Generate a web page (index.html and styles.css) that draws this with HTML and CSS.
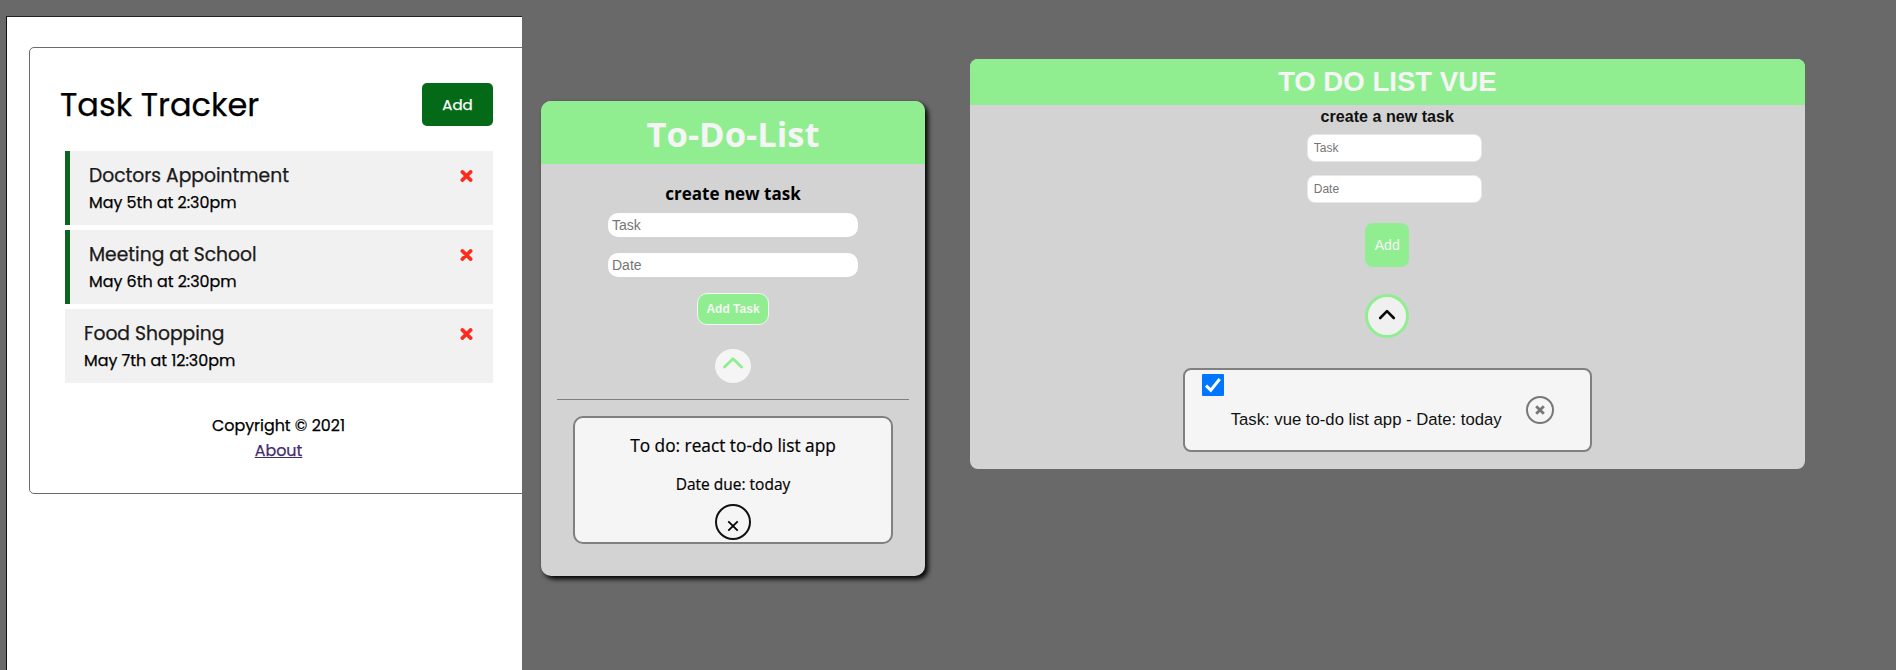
FILE: index.html
```html
<!DOCTYPE html>
<html lang="en">
<head>
<meta charset="utf-8">
<title>Task apps</title>
<link rel="stylesheet" href="styles.css">
</head>
<body>
<main class="board">
  <section class="tracker">
    <div class="tracker-box">
      <header class="tracker-header">
        <h1 class="tracker-title">Task Tracker</h1>
        <button class="tracker-add">Add</button>
      </header>
      <div class="tasks">
        <article class="task reminder">
          <h3 class="task-name">Doctors Appointment<svg class="times" viewBox="0 0 13 12"><path d="M2.3 1.9 10.7 10.1M10.7 1.9 2.3 10.1"/></svg></h3>
          <p class="task-date">May 5th at 2:30pm</p>
        </article>
        <article class="task reminder">
          <h3 class="task-name">Meeting at School<svg class="times" viewBox="0 0 13 12"><path d="M2.3 1.9 10.7 10.1M10.7 1.9 2.3 10.1"/></svg></h3>
          <p class="task-date">May 6th at 2:30pm</p>
        </article>
        <article class="task">
          <h3 class="task-name">Food Shopping<svg class="times" viewBox="0 0 13 12"><path d="M2.3 1.9 10.7 10.1M10.7 1.9 2.3 10.1"/></svg></h3>
          <p class="task-date">May 7th at 12:30pm</p>
        </article>
      </div>
      <footer class="tracker-footer">
        <p>Copyright © 2021</p>
        <a href="#">About</a>
      </footer>
    </div>
  </section>

  <section class="todo">
    <h1 class="todo-title">To-Do-List</h1>
    <h3 class="todo-sub">create new task</h3>
    <input class="todo-input" type="text" placeholder="Task">
    <input class="todo-input" type="text" placeholder="Date">
    <button class="todo-add">Add Task</button>
    <div class="todo-toggle"><svg width="20" height="12" viewBox="0 0 20 12"><path d="M1.5 10 10 1.7 18.5 10"/></svg></div>
    <hr class="todo-rule">
    <article class="todo-item">
      <p class="todo-text">To do: react to-do list app</p>
      <p class="todo-due">Date due: today</p>
      <div class="todo-remove"><svg width="12" height="12" viewBox="0 0 12 12"><path d="M1.3 1.3 10.7 10.7M10.7 1.3 1.3 10.7"/></svg></div>
    </article>
  </section>

  <section class="vue">
    <h1 class="vue-title">TO DO LIST VUE</h1>
    <h3 class="vue-sub">create a new task</h3>
    <div class="vue-form">
      <input class="vue-input" type="text" placeholder="Task">
      <input class="vue-input" type="text" placeholder="Date">
    </div>
    <button class="vue-add">Add</button>
    <div class="vue-toggle"><svg width="18" height="11" viewBox="0 0 18 11"><path d="M2.2 9 9 2.2 15.8 9"/></svg></div>
    <article class="vue-item">
      <span class="vue-check"><svg width="22" height="22" viewBox="0 0 22 22"><path d="M4 11.7 8.8 16.2 17.7 5"/></svg></span>
      <p class="vue-text">Task: vue to-do list app - Date: today</p>
      <div class="vue-remove"><svg width="10" height="10" viewBox="0 0 10 10"><path d="M1.2 1.2 8.8 8.8M8.8 1.2 1.2 8.8"/></svg></div>
    </article>
  </section>
</main>
</body>
</html>
```
FILE: styles.css
```css
* { box-sizing: border-box; margin: 0; padding: 0; }
body { background: #696969; overflow: hidden; }
svg { display: block; fill: none; stroke-linecap: round; stroke-linejoin: round; }
h1, h3, p { white-space: nowrap; }
.board { display: flex; align-items: flex-start; width: 1896px; height: 670px; overflow: hidden; }
.tracker, .todo, .vue { flex-shrink: 0; }

/* Task Tracker */
.tracker { width: 516px; height: 654px; margin: 16px 0 0 6px; padding: 30px 0 0 22px; background: #fff; border-left: 1px solid #111; border-top: 1px solid #222; overflow: hidden; font-family: Poppins, Inter, sans-serif; color: #000; -webkit-text-stroke: 0.25px; }
.tracker-box { width: 520px; height: 447px; border: 1px solid #6b6b6b; border-radius: 5px; padding: 35px 0 0 30px; }
.tracker-header { display: flex; justify-content: space-between; align-items: center; width: 433px; height: 43px; }
.tracker-title { font-size: 32px; font-weight: 400; line-height: 44px; }
.tracker-add { width: 71px; height: 43px; border: 0; border-radius: 5px; background: #046a18; color: #fff; font: 400 15px/43px Poppins, Inter, sans-serif; -webkit-text-stroke: 0.25px; }
.tasks { display: flex; flex-direction: column; gap: 5px; width: 428px; margin: 25px 0 0 5px; }
.task { height: 74px; padding: 13px 20px 0 19px; background: #f1f1f1; }
.reminder { border-left: 5px solid #0b6420; }
.task-name { display: flex; justify-content: space-between; align-items: center; font-size: 18.72px; font-weight: 400; line-height: 24px; color: #1a1a1a; }
.times { width: 13px; height: 12px; margin-bottom: 1px; stroke: #fc2b1c; stroke-width: 3.6; }
.task-date { margin-top: 3px; font-size: 15.9px; line-height: 24px; }
.tracker-footer { width: 429px; margin: 30px 0 0 4px; text-align: center; font-size: 15.9px; line-height: 25px; }
.tracker-footer a { color: #442c6f; text-decoration: underline; }

/* React list */
.todo { display: flex; flex-direction: column; align-items: center; width: 384px; height: 475px; margin: 101px 0 0 19px; background: #d3d3d3; border-radius: 10px; box-shadow: 3px 3px 5px #000; font-family: "Segoe UI", "Open Sans", sans-serif; color: #000; }
.todo-title { width: 100%; height: 63px; border-radius: 10px 10px 0 0; background: #90ee90; color: #f5f5f5; font-size: 34.6px; line-height: 66px; text-align: center; }
.todo-sub { margin: 18px 0 7px; font-size: 17px; line-height: 24px; }
.todo-input { width: 250px; height: 24px; margin-bottom: 16px; padding: 0 4px; border: 0; border-radius: 10px; background: #fff; font: 14px "Liberation Sans", sans-serif; }
.todo-input::placeholder, .vue-input::placeholder { color: #757575; }
.todo-add { width: 72px; height: 32px; border: 1px solid #f5f5f5; border-radius: 10px; background: #90ee90; color: #f5f5f5; font: bold 12px "Liberation Sans", sans-serif; white-space: nowrap; }
.todo-toggle { display: flex; justify-content: center; width: 36px; height: 34px; margin-top: 24px; padding-top: 8px; border-radius: 50%; background: #f5f5f5; }
.todo-toggle svg { stroke: #90ee90; stroke-width: 2.8; }
.todo-rule { width: 352px; height: 1px; margin-top: 16px; border: 0; background: #808080; }
.todo-item { display: flex; flex-direction: column; align-items: center; width: 320px; height: 128px; margin-top: 16px; padding-top: 16px; border: 2px solid #808080; border-radius: 10px; background: #f5f5f5; -webkit-text-stroke: 0.2px; }
.todo-text { font-size: 17.3px; line-height: 24px; }
.todo-due { margin-top: 14px; font-size: 15.5px; line-height: 24px; }
.todo-remove { display: flex; justify-content: center; width: 36px; height: 36px; margin-top: 8px; padding-top: 14px; border: 2px solid #111; border-radius: 50%; }
.todo-remove svg { stroke: #000; stroke-width: 1.8; stroke-linecap: butt; }

/* Vue list */
.vue { display: flex; flex-direction: column; align-items: center; width: 834.5px; height: 409.5px; margin: 59px 0 0 45px; border-radius: 8px; background: #d3d3d3; font-family: "Liberation Sans", sans-serif; color: #111; }
.vue-title { width: 100%; height: 46px; border-radius: 8px 8px 0 0; background: #90ee90; color: #f5f5f5; font-size: 27.6px; line-height: 46px; text-align: center; }
.vue-sub { height: 29px; font-size: 16.1px; line-height: 23px; }
.vue-form { display: flex; flex-direction: column; gap: 13px; padding-left: 14px; }
.vue-input { width: 175px; height: 28px; padding: 0 6px; border: 1px solid #e8e8e8; border-radius: 8px; background: #fff; font: 12px "Liberation Sans", sans-serif; }
.vue-add { width: 44px; height: 44px; margin-top: 20px; border: 0; border-radius: 8px; background: #90ee90; color: #f5f5f5; font: 14px "Liberation Sans", sans-serif; }
.vue-toggle { display: flex; justify-content: center; width: 44px; height: 44px; margin-top: 27px; padding-top: 12px; border: 3.5px solid #90ee90; border-radius: 50%; background: #f0f0f0; }
.vue-toggle svg { stroke: #0a0a0a; stroke-width: 2.6; }
.vue-item { display: flex; width: 409px; height: 84px; margin-top: 30px; padding: 4px 0 0 17px; border: 2px solid #808080; border-radius: 8px; background: #f5f5f5; }
.vue-check { width: 22px; height: 22px; border-radius: 1px; background: #0075ff; }
.vue-check svg { stroke: #fff; stroke-width: 3; stroke-linecap: butt; stroke-linejoin: miter; }
.vue-text { width: 295px; margin-top: 34px; padding-left: 7px; font-size: 16.7px; line-height: 24px; }
.vue-remove { display: flex; justify-content: center; align-items: center; width: 28px; height: 28px; margin: 22px 0 0 7.5px; border: 2px solid #777; border-radius: 50%; }
.vue-remove svg { stroke: #777; stroke-width: 2.8; stroke-linecap: butt; }
```
